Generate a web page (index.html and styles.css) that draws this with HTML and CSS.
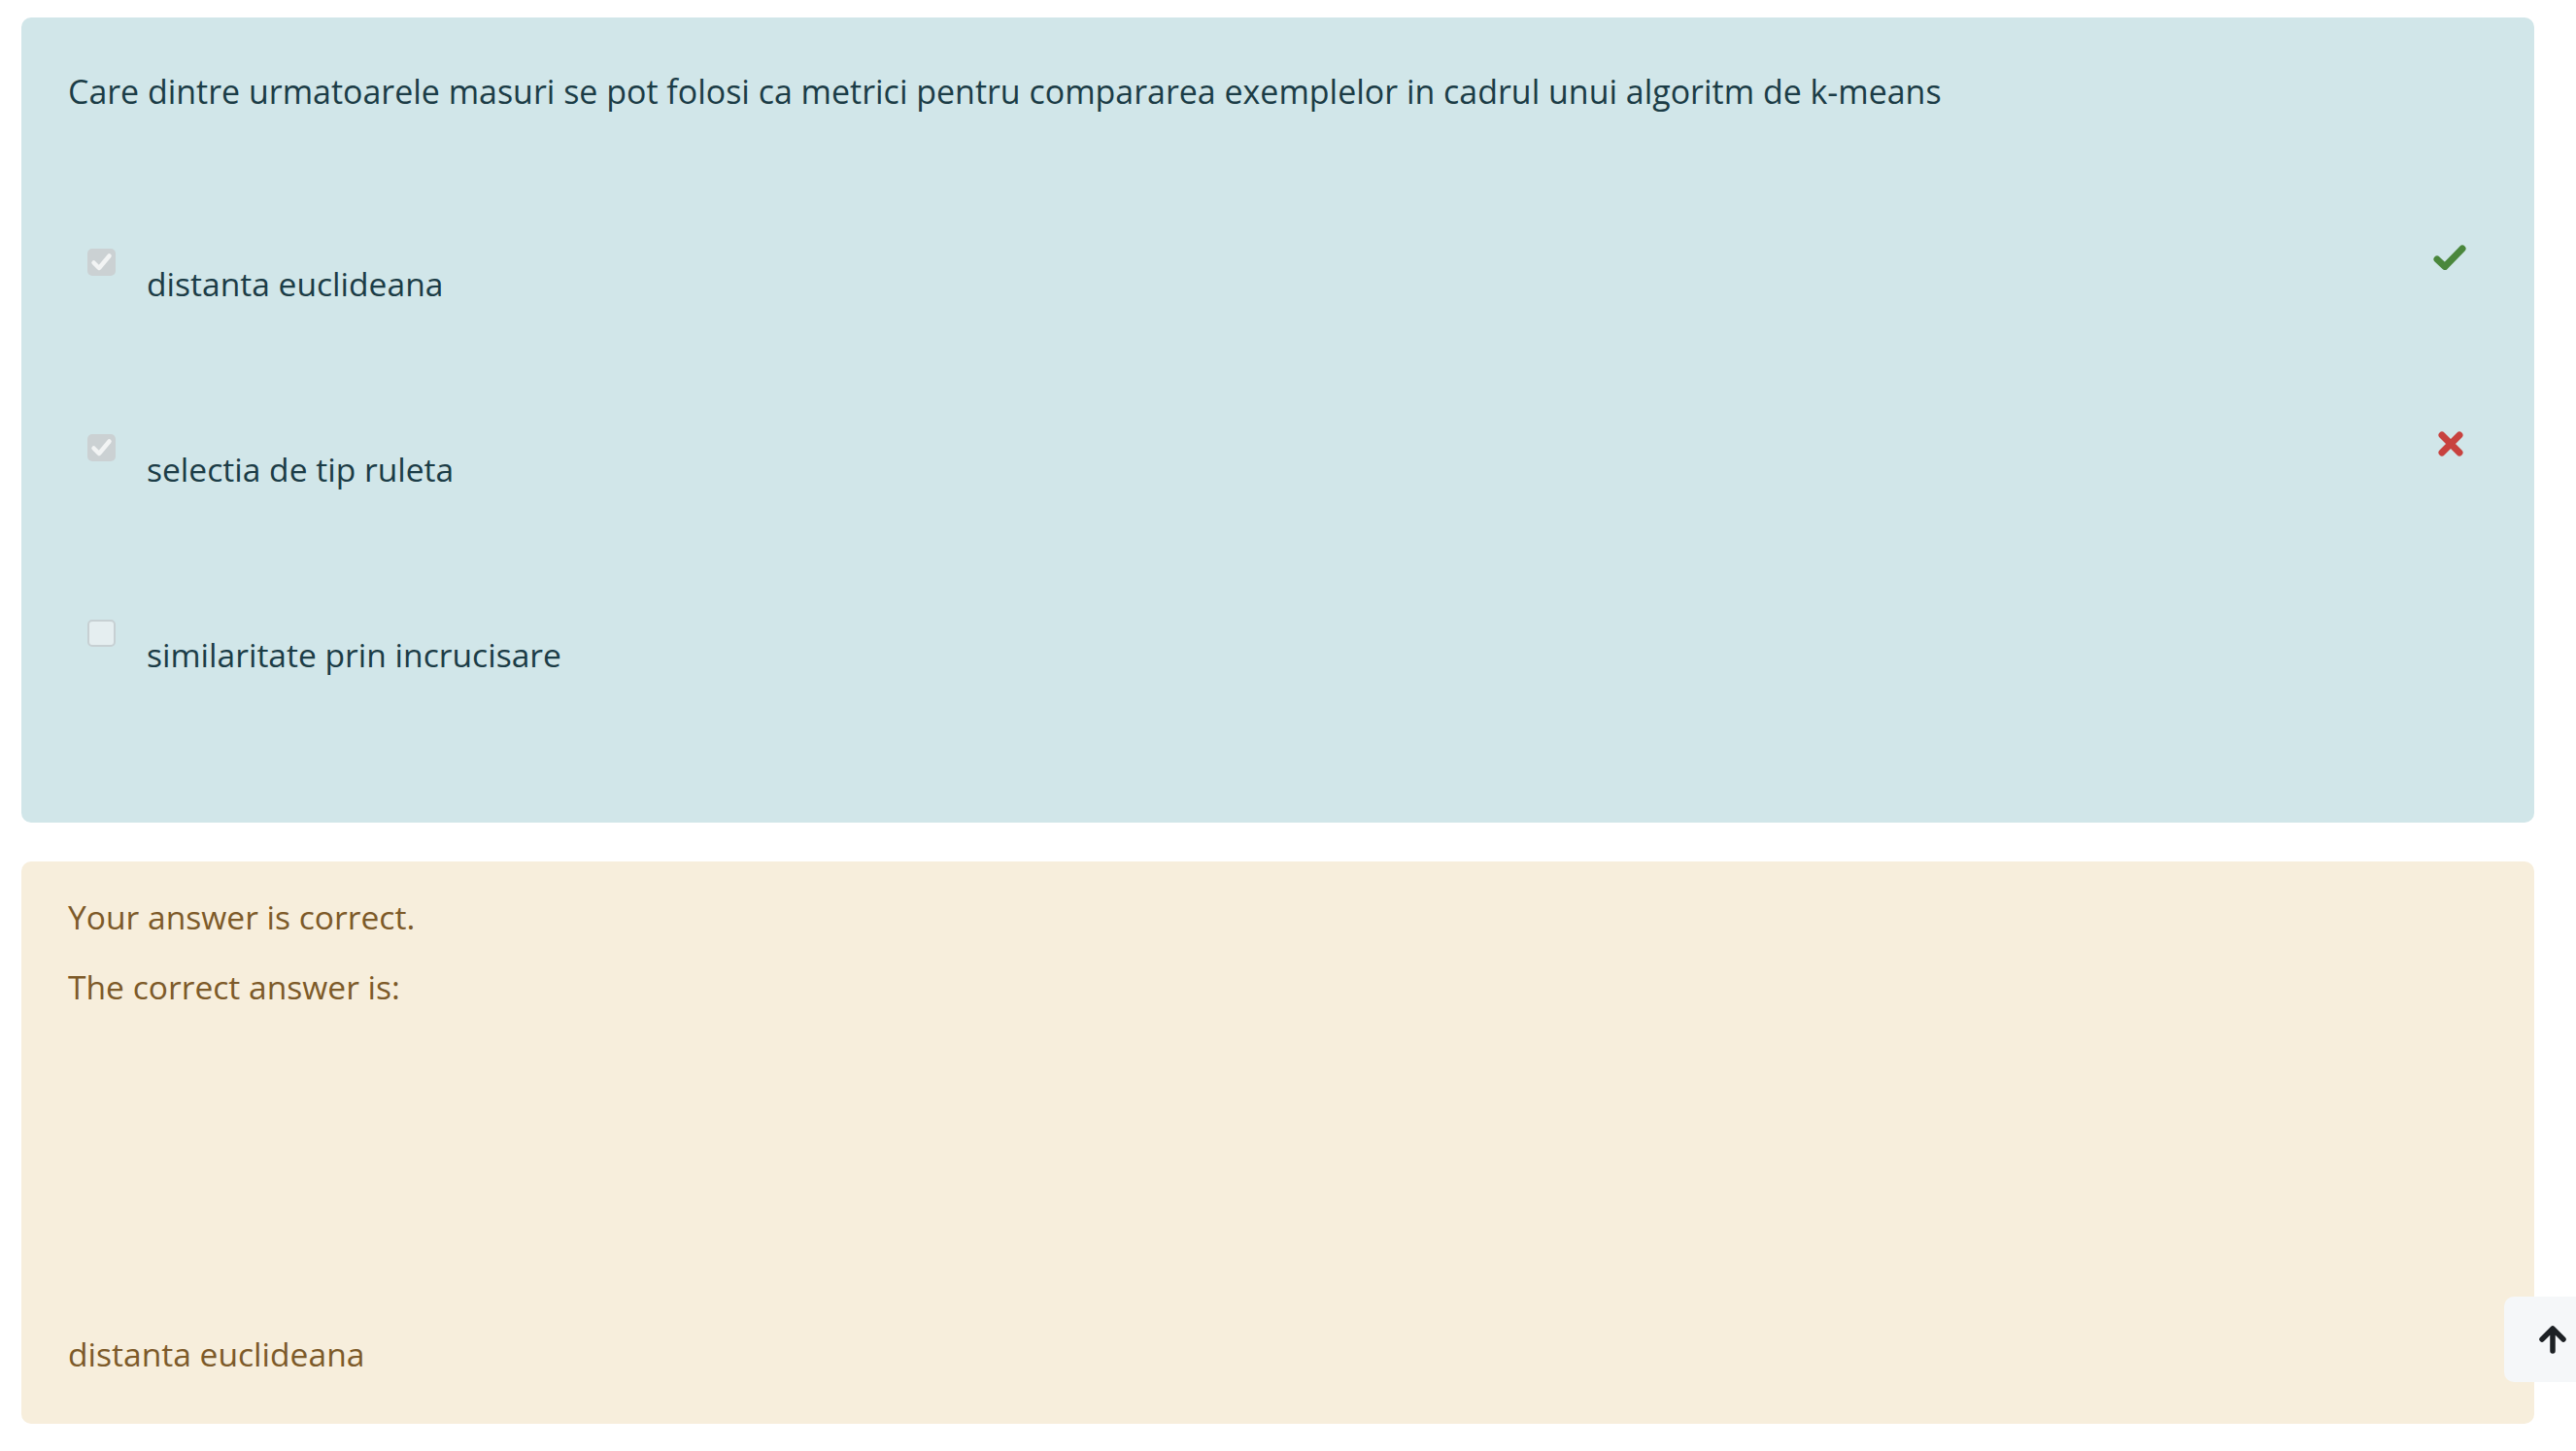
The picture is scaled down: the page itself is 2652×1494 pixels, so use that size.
FILE: index.html
```html
<!DOCTYPE html>
<html lang="ro">
<head>
<meta charset="utf-8">
<title>Question</title>
<link rel="stylesheet" href="styles.css">
</head>
<body>
<div class="que">
  <div class="formulation">
    <div class="qtext">Care dintre urmatoarele masuri se pot folosi ca metrici pentru compararea exemplelor in cadrul unui algoritm de k-means</div>
    <div class="answers">
      <div class="row">
        <span class="cb checked"><svg viewBox="0 0 29 28" width="29" height="28"><polyline points="6.5,14.5 12,20 22.5,7.5" fill="none" stroke="#f2f4f4" stroke-width="4.5" stroke-linecap="round" stroke-linejoin="round"/></svg></span>
        <span class="label">distanta euclideana</span>
        <span class="mark"><svg viewBox="0 0 34 26" width="34" height="26"><polyline points="4,15 12,22.5 30,4" fill="none" stroke="#4a873c" stroke-width="7" stroke-linecap="round" stroke-linejoin="round"/></svg></span>
      </div>
      <div class="row">
        <span class="cb checked"><svg viewBox="0 0 29 28" width="29" height="28"><polyline points="6.5,14.5 12,20 22.5,7.5" fill="none" stroke="#f2f4f4" stroke-width="4.5" stroke-linecap="round" stroke-linejoin="round"/></svg></span>
        <span class="label">selectia de tip ruleta</span>
        <span class="mark mark-x"><svg viewBox="0 0 26 26" width="26" height="26"><path d="M4 4 L22 22 M22 4 L4 22" fill="none" stroke="#c8423f" stroke-width="7" stroke-linecap="round"/></svg></span>
      </div>
      <div class="row">
        <span class="cb"></span>
        <span class="label">similaritate prin incrucisare</span>
      </div>
    </div>
  </div>
  <div class="outcome">
    <p class="line">Your answer is correct.</p>
    <p class="line second">The correct answer is:</p>
    <p class="line right-answer">distanta euclideana</p>
  </div>
</div>
<a class="totop" href="#"><svg viewBox="0 0 32 32" width="32" height="32"><path d="M16 28 V6 M5 16 L16 5 L27 16" fill="none" stroke="#1d2125" stroke-width="5.5" stroke-linecap="round" stroke-linejoin="round"/></svg></a>
</body>
</html>
```
FILE: styles.css
```css
html, body {
  margin: 0;
  padding: 0;
  background: #ffffff;
}
body {
  font-family: "Open Sans", "Noto Sans", sans-serif;
  font-size: 33.6px;
  line-height: 51px;
}
.que {
  margin: 18px 43px 0 22px;
}
.formulation {
  background: #d1e6e9;
  color: #1b3c46;
  border-radius: 10px;
  padding: 51px 48px 18px 48px;
}
.qtext {
  margin: 0;
  font-size: 33.95px;
}
.answers {
  margin-top: 136px;
  display: flex;
  flex-direction: column;
}
.row {
  display: flex;
  align-items: flex-start;
  height: 191px;
}
.cb {
  box-sizing: border-box;
  width: 29px;
  height: 28px;
  margin-left: 20px;
  border-radius: 5px;
  background: #e5eef0;
  border: 2px solid #c7d0d3;
  flex: none;
}
.cb.checked {
  background: #cbd1d3;
  border: none;
}
.cb svg {
  display: block;
}
.label {
  margin-left: 32px;
  padding-top: 11px;
}
.mark {
  margin-left: auto;
  margin-right: 22px;
  margin-top: -4px;
  line-height: 0;
}
.mark-x {
  margin-right: 25px;
  margin-top: -3px;
}
.outcome {
  margin-top: 40px;
  background: #f7eedc;
  color: #7d5a29;
  border-radius: 10px;
  padding: 32px 48px 46px 48px;
}
.line {
  margin: 0;
}
.second {
  margin-top: 21px;
}
.right-answer {
  margin-top: 327px;
}
.totop {
  position: fixed;
  right: -12px;
  bottom: 71px;
  width: 86px;
  height: 88px;
  background: #f5f7f9;
  border-radius: 10px;
  display: flex;
  align-items: center;
  justify-content: center;
}
.totop svg {
  display: block;
  margin-left: 14px;
}
```
